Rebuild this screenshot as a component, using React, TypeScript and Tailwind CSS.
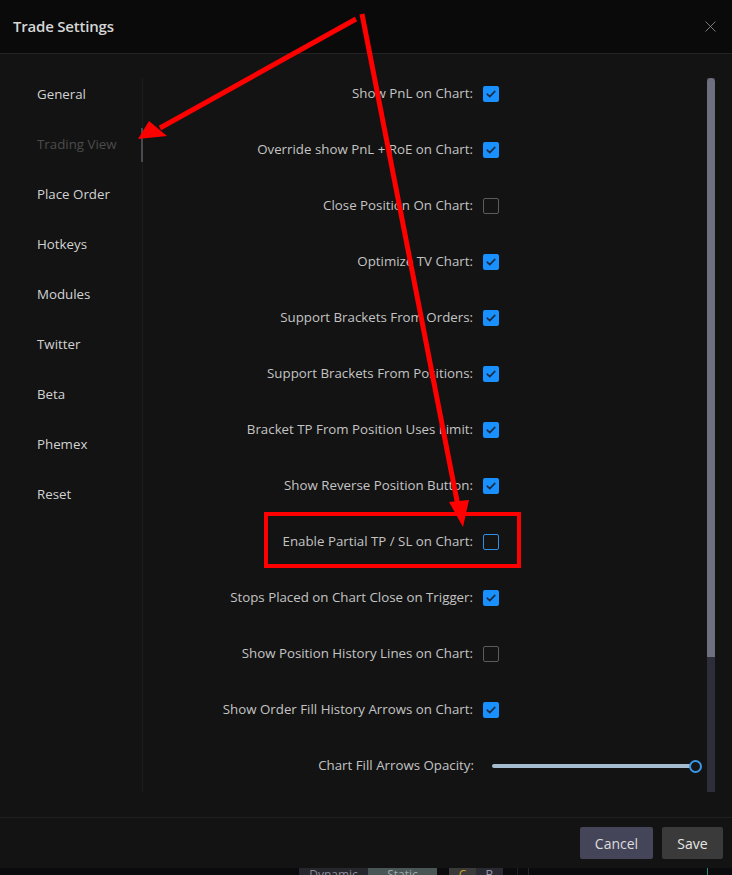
import { X } from "lucide-react";

const menu = [
  "General",
  "Trading View",
  "Place Order",
  "Hotkeys",
  "Modules",
  "Twitter",
  "Beta",
  "Phemex",
  "Reset",
];

const rows: { label: string; checked: boolean; focus?: boolean }[] = [
  { label: "Show PnL on Chart:", checked: true },
  { label: "Override show PnL + RoE on Chart:", checked: true },
  { label: "Close Position On Chart:", checked: false },
  { label: "Optimize TV Chart:", checked: true },
  { label: "Support Brackets From Orders:", checked: true },
  { label: "Support Brackets From Positions:", checked: true },
  { label: "Bracket TP From Position Uses Limit:", checked: true },
  { label: "Show Reverse Position Button:", checked: true },
  { label: "Enable Partial TP / SL on Chart:", checked: false, focus: true },
  { label: "Stops Placed on Chart Close on Trigger:", checked: true },
  { label: "Show Position History Lines on Chart:", checked: false },
  { label: "Show Order Fill History Arrows on Chart:", checked: true },
];

function Checkbox({ checked, focus }: { checked: boolean; focus?: boolean }) {
  if (checked) {
    return (
      <span className="grid h-4 w-4 place-items-center rounded-[2px] bg-[#1890ff]">
        <svg width="10" height="8" viewBox="0 0 10 8" fill="none">
          <path
            d="M1.2 4.2 L3.8 6.6 L8.8 1.4"
            stroke="#1d2b3d"
            strokeWidth="1.6"
            strokeLinecap="round"
            strokeLinejoin="round"
          />
        </svg>
      </span>
    );
  }
  return (
    <span
      className={`block h-4 w-4 rounded-[2px] border ${
        focus ? "border-[#2f8fe6]" : "border-[#5c5c5c]"
      } bg-[#141414]`}
    />
  );
}

export default function App() {
  return (
    <div
      className="relative h-[875px] w-[732px] overflow-hidden bg-[#0b0b0d] text-[13.3px]"
      style={{ fontFamily: '"Open Sans", "Noto Sans", sans-serif' }}
    >
      <div className="flex h-[868px] flex-col bg-[#131313]">
        <header className="flex h-[54px] items-center justify-between border-b border-[#232323] bg-[#0a0a0a] pl-[13px] pr-[12px]">
          <h1 className="text-[15px] font-semibold tracking-[-0.2px] text-[#d6d6d6]">
            Trade Settings
          </h1>
          <X size={19} strokeWidth={1.1} className="text-[#8a8a8a]" />
        </header>

        <div className="flex flex-1 pt-[24px]">
          <nav className="flex h-[714px] w-[143px] shrink-0 flex-col gap-[16px] border-r border-[#1d1d1f] pl-[37px]">
            {menu.map((item, i) => (
              <div key={item} className="relative flex h-[34px] items-center">
                <span className={i === 1 ? "text-[#4b4b4b]" : "text-[#d2d2d2]"}>
                  {item}
                </span>
                {i === 1 ? (
                  <span className="absolute right-[-1px] top-0 h-full w-[2px] bg-[#4a4a4e]" />
                ) : null}
              </div>
            ))}
          </nav>

          <div className="flex h-[714px] flex-1 overflow-hidden">
            <div className="flex flex-1 flex-col gap-[24px]">
              {rows.map((row) => (
                <div key={row.label} className="flex h-[32px] items-center">
                  <span className="w-[330px] text-right text-[#c4c4c4]">
                    {row.label}
                  </span>
                  <span className="ml-[10px]">
                    <Checkbox checked={row.checked} focus={row.focus} />
                  </span>
                </div>
              ))}
              <div className="flex h-[32px] items-center">
                <span className="w-[331px] text-right text-[#c4c4c4]">
                  Chart Fill Arrows Opacity:
                </span>
                <div className="ml-[18px] flex items-center">
                  <span className="h-[4px] w-[200px] rounded-full bg-[#a3bcd0]" />
                  <span className="-ml-[3px] h-[13px] w-[13px] rounded-full border-2 border-[#3b97e6] bg-[#151515]" />
                </div>
              </div>
            </div>
            <div className="mr-[17px] flex w-[8px] flex-col bg-[#2e2e3a]">
              <div className="h-[579px] rounded-t-[4px] bg-[#6f707f]" />
            </div>
          </div>
        </div>

        <footer className="mt-[25px] flex h-[51px] items-center justify-end gap-[9px] border-t border-[#1f1f1f] pr-[9px]">
          <button className="h-[32px] w-[73px] rounded-[2px] bg-[#45455a] text-[14px] text-[#dcdcdc]">
            Cancel
          </button>
          <button className="h-[32px] w-[61px] rounded-[2px] bg-[#3a3a3a] text-[14px] text-[#e6e6e6]">
            Save
          </button>
        </footer>
      </div>

      <div className="flex h-[7px] items-start pl-[299px] text-[12px] leading-[14px]">
        <span className="h-full w-[69px] bg-[#26262e] text-center text-[#8a8a96]">
          Dynamic
        </span>
        <span className="h-full w-[69px] bg-[#4a5555] text-center text-[#9aa]">
          Static
        </span>
        <span className="ml-[12px] h-full w-[27px] bg-[#3a3a3a] text-center text-[#c9a227]">
          C
        </span>
        <span className="h-full w-[27px] bg-[#2a2a34] text-center text-[#9a9aa8]">
          B
        </span>
        <span className="ml-[14px] h-full w-px bg-[#222]" />
        <span className="ml-[10px] h-full w-[179px] border-l border-[#1e2a30]" />
        <span className="h-full w-px bg-[#1f8f80]" />
      </div>

      <svg
        className="pointer-events-none absolute inset-0"
        width="732"
        height="875"
        viewBox="0 0 732 875"
      >
        <line x1="356" y1="19" x2="160" y2="128" stroke="#ff0000" strokeWidth="5" />
        <polygon points="138,139 149,121 167,136" fill="#ff0000" />
        <line x1="362" y1="14" x2="458" y2="506" stroke="#ff0000" strokeWidth="5" />
        <polygon points="463,527 449,502 469,500" fill="#ff0000" />
        <rect x="266" y="514" width="253" height="52" fill="none" stroke="#ff0000" strokeWidth="4" />
      </svg>
    </div>
  );
}
